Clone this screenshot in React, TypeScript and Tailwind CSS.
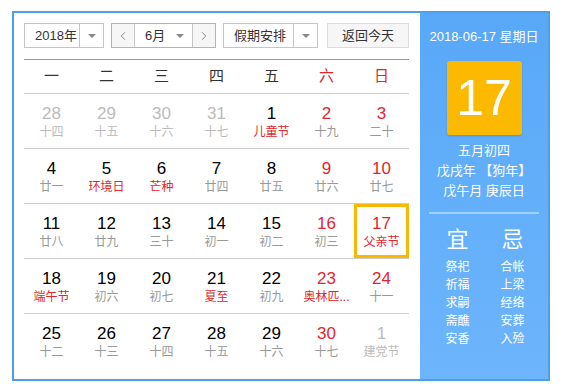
import { ChevronLeft, ChevronRight } from "lucide-react";

type Day = {
  n: number;
  sub: string;
  other?: boolean;
  weekend?: boolean;
  fest?: boolean;
  today?: boolean;
};

const weekdays = ["一", "二", "三", "四", "五", "六", "日"];

const rows: Day[][] = [
  [
    { n: 28, sub: "十四", other: true },
    { n: 29, sub: "十五", other: true },
    { n: 30, sub: "十六", other: true },
    { n: 31, sub: "十七", other: true },
    { n: 1, sub: "儿童节", fest: true },
    { n: 2, sub: "十九", weekend: true },
    { n: 3, sub: "二十", weekend: true },
  ],
  [
    { n: 4, sub: "廿一" },
    { n: 5, sub: "环境日", fest: true },
    { n: 6, sub: "芒种", fest: true },
    { n: 7, sub: "廿四" },
    { n: 8, sub: "廿五" },
    { n: 9, sub: "廿六", weekend: true },
    { n: 10, sub: "廿七", weekend: true },
  ],
  [
    { n: 11, sub: "廿八" },
    { n: 12, sub: "廿九" },
    { n: 13, sub: "三十" },
    { n: 14, sub: "初一" },
    { n: 15, sub: "初二" },
    { n: 16, sub: "初三", weekend: true },
    { n: 17, sub: "父亲节", weekend: true, fest: true, today: true },
  ],
  [
    { n: 18, sub: "端午节", fest: true },
    { n: 19, sub: "初六" },
    { n: 20, sub: "初七" },
    { n: 21, sub: "夏至", fest: true },
    { n: 22, sub: "初九" },
    { n: 23, sub: "奥林匹...", weekend: true, fest: true },
    { n: 24, sub: "十一", weekend: true },
  ],
  [
    { n: 25, sub: "十二" },
    { n: 26, sub: "十三" },
    { n: 27, sub: "十四" },
    { n: 28, sub: "十五" },
    { n: 29, sub: "十六" },
    { n: 30, sub: "十七", weekend: true },
    { n: 1, sub: "建党节", other: true },
  ],
];

const yi = ["祭祀", "祈福", "求嗣", "斋醮", "安香"];
const ji = ["合帐", "上梁", "经络", "安葬", "入殓"];

function Caret() {
  return (
    <span className="block h-0 w-0 border-x-[4px] border-t-[4px] border-x-transparent border-t-[#888]" />
  );
}

function DayCell({ d }: { d: Day }) {
  const numColor = d.other
    ? "text-[#bbbbbb]"
    : d.weekend
    ? "text-[#e2262e]"
    : "text-black";
  const subColor = d.other
    ? "text-[#bbbbbb]"
    : d.fest
    ? "text-[#e2262e]"
    : "text-[#999999]";
  return (
    <div
      className={`flex flex-col items-center pt-[10px] ${
        d.today ? "shadow-[inset_0_0_0_3px_#fbb800]" : ""
      }`}
    >
      <span className={`text-[17px] leading-[20px] ${numColor}`}>{d.n}</span>
      <span className={`text-[12px] leading-[16px] whitespace-nowrap ${subColor}`}>
        {d.sub}
      </span>
    </div>
  );
}

export default function App() {
  return (
    <div
      className="min-h-[389px] bg-white pl-[12px] pt-[11px]"
      style={{ fontFamily: '"Liberation Sans", "Noto Sans CJK SC", sans-serif' }}
    >
      <div className="flex h-[370px] w-[538px] border-2 border-[#4e9ef0]">
        {/* left: month grid */}
        <div className="w-[406px] pl-[10px] pt-[10px]">
          <div className="flex h-[25px] text-[13px] text-[#333]">
            <div className="flex w-[80px] border border-[#c6c6c6]">
              <span className="flex flex-1 items-center pl-[10px]">2018年</span>
              <span className="flex w-[24px] items-center justify-center border-l border-[#c6c6c6]">
                <Caret />
              </span>
            </div>
            <div className="ml-[7px] flex w-[105px] border border-[#b4b4b4]">
              <span className="flex w-[22px] items-center justify-center bg-[#f6f6f6] text-[#777]">
                <ChevronLeft size={14} strokeWidth={1.5} />
              </span>
              <span className="flex flex-1 items-center justify-between border-x border-[#c6c6c6] pl-[10px] pr-[8px]">
                6月
                <Caret />
              </span>
              <span className="flex w-[22px] items-center justify-center bg-[#f6f6f6] text-[#777]">
                <ChevronRight size={14} strokeWidth={1.5} />
              </span>
            </div>
            <div className="ml-[7px] flex w-[95px] border border-[#c6c6c6]">
              <span className="flex flex-1 items-center pl-[10px]">假期安排</span>
              <span className="flex w-[24px] items-center justify-center border-l border-[#c6c6c6]">
                <Caret />
              </span>
            </div>
            <div className="ml-[9px] flex w-[82px] items-center justify-center border border-[#dcdcdc] bg-[#f6f6f6]">
              返回今天
            </div>
          </div>

          <div className="mt-[11px] w-[385px] border-t border-[#5aa5f0]">
            <div className="grid h-[34px] grid-cols-7 border-b border-[#cccccc] text-[15px]">
              {weekdays.map((w, i) => (
                <div
                  key={w}
                  className={`flex items-center justify-center ${
                    i >= 5 ? "text-[#e2262e]" : "text-[#333]"
                  }`}
                >
                  {w}
                </div>
              ))}
            </div>
            {rows.map((row, ri) => (
              <div
                key={ri}
                className={`grid h-[55px] grid-cols-7 ${
                  ri < rows.length - 1 ? "border-b border-[#cccccc]" : ""
                }`}
              >
                {row.map((d, di) => (
                  <DayCell key={di} d={d} />
                ))}
              </div>
            ))}
          </div>
        </div>

        {/* right: today's detail */}
        <div className="flex flex-1 flex-col items-center bg-gradient-to-b from-[#58a8f8] to-[#6db5fc] text-white">
          <div className="mt-[15px] text-[13px] leading-[18px]">2018-06-17 星期日</div>
          <div className="mt-[15px] flex h-[74px] w-[75px] items-center justify-center rounded-[3px] bg-[#fdb900] text-[50px] font-light shadow-[0_1px_2px_rgba(0,0,0,0.15)]">
            17
          </div>
          <div className="mt-[6px] flex flex-col items-center text-[13px] leading-[20px]">
            <span>五月初四</span>
            <span>戊戌年 【狗年】</span>
            <span>戊午月 庚辰日</span>
          </div>
          <div className="mt-[11px] h-[2px] w-[110px] bg-white/40" />
          <div className="ml-[2px] mt-[12px] flex gap-[19px]">
            <div className="flex w-[36px] flex-col items-center">
              <span className="text-[22px] leading-[28px]">宜</span>
              <div className="mt-[4px] flex flex-col items-center text-[12px] leading-[18px]">
                {yi.map((t) => (
                  <span key={t}>{t}</span>
                ))}
              </div>
            </div>
            <div className="flex w-[36px] flex-col items-center">
              <span className="text-[22px] leading-[28px]">忌</span>
              <div className="mt-[4px] flex flex-col items-center text-[12px] leading-[18px]">
                {ji.map((t) => (
                  <span key={t}>{t}</span>
                ))}
              </div>
            </div>
          </div>
        </div>
      </div>
    </div>
  );
}
